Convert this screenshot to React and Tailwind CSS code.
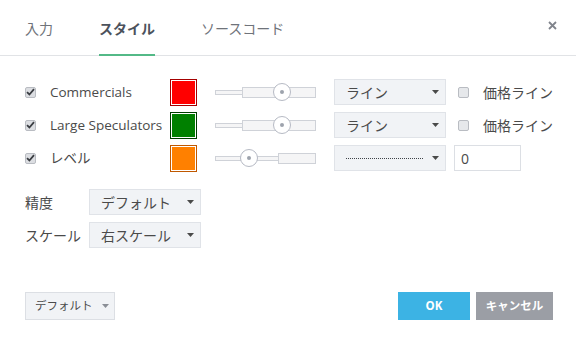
import React from 'react';

const font = { fontFamily: '"Open Sans", "Noto Sans CJK JP", sans-serif' };

const Check = ({ className = '' }) => (
  <span className={`flex h-[11px] w-[11px] items-center justify-center rounded-[2px] border border-[#b9bcc2] bg-[#dcdee2] ${className}`}>
    <svg width="9" height="8" viewBox="0 0 9 8">
      <path d="M1 4.2 L3.4 6.5 L8 1.2" fill="none" stroke="#3a3d42" strokeWidth="1.8" />
    </svg>
  </span>
);

const EmptyCheck = () => (
  <span className="ml-[12px] h-[11px] w-[11px] rounded-[2px] border border-[#b9bcc2] bg-[#e6e8eb]" />
);

const Arrow = ({ color = '#4a4a4a' }) => (
  <svg width="7" height="4" viewBox="0 0 7 4">
    <path d="M0 0 L7 0 L3.5 4 Z" fill={color} />
  </svg>
);

const Select = ({ children, className = '' }) => (
  <div className={`flex h-[26px] items-center justify-between border border-[#e0e3e8] bg-[#f1f3f6] pl-[11px] pr-[6px] text-[14px] text-[#4a4a4a] ${className}`}>
    {children}
    <Arrow />
  </div>
);

const Swatch = ({ fill, edge }) => (
  <div className="h-[27px] w-[27px] border p-[1px]" style={{ borderColor: edge }}>
    <div className="h-full w-full" style={{ background: fill }} />
  </div>
);

const Slider = ({ thick, handle }) => (
  <div className="relative h-[18px] w-[101px]">
    <div className="absolute left-0 right-0 top-[7px] h-[5px] border border-[#cfd2d8] bg-[#f5f5f6]" />
    <div className="absolute right-0 top-[4px] h-[11px] border border-[#cfd2d8] bg-[#f5f5f6]" style={{ left: thick }} />
    <div
      className="absolute top-0 flex h-[18px] w-[18px] items-center justify-center rounded-full border border-[#b6bac4] bg-white"
      style={{ left: handle - 9 }}
    >
      <div className="h-[4px] w-[4px] rounded-full bg-[#9ea3ad]" />
    </div>
  </div>
);

const rows = [
  { label: 'Commercials', fill: '#ff0000', edge: '#a40000', thick: 27, handle: 67, kind: 'line' },
  { label: 'Large Speculators', fill: '#008000', edge: '#003d00', thick: 27, handle: 67, kind: 'line' },
  { label: 'レベル', fill: '#ff8000', edge: '#c05800', thick: 63, handle: 34, kind: 'level' },
];

export default function App() {
  return (
    <div className="h-[344px] w-[576px] bg-white text-[#4a4a4a]" style={font}>
      <div className="flex h-[56px] items-end border-b border-[#e1e3e6] pl-[25px] pr-[19px]">
        <div className="flex h-full flex-1 items-stretch gap-[46px] text-[14px]">
          <div className="flex items-center pt-[2px] text-[#6f737a]">入力</div>
          <div className="relative flex items-center pt-[2px] font-bold text-[#4c525c]">
            スタイル
            <div className="absolute bottom-[-1px] left-0 right-0 h-[2px] bg-[#53b987]" />
          </div>
          <div className="flex items-center pt-[2px] text-[#6f737a]">ソースコード</div>
        </div>
        <div className="flex h-full items-center pb-[4px]">
          <svg width="9" height="9" viewBox="0 0 9 9">
            <path d="M1 1 L8 8 M8 1 L1 8" stroke="#80848c" strokeWidth="1.8" />
          </svg>
        </div>
      </div>

      <div className="flex flex-col gap-[7px] pl-[25px] pt-[23px]">
        {rows.map((r) => (
          <div key={r.label} className="flex h-[26px] items-center">
            <Check />
            <span className="ml-[14px] w-[120px] text-[13.5px] text-[#4a4a4a]">{r.label}</span>
            <Swatch fill={r.fill} edge={r.edge} />
            <div className="ml-[18px]">
              <Slider thick={r.thick} handle={r.handle} />
            </div>
            {r.kind === 'line' ? (
              <>
                <Select className="ml-[18px] w-[112px]">ライン</Select>
                <EmptyCheck />
                <span className="ml-[14px] text-[14px]">価格ライン</span>
              </>
            ) : (
              <>
                <Select className="ml-[18px] w-[112px]">
                  <span className="h-0 w-[77px] border-t border-dotted border-[#3f4349]" />
                </Select>
                <div className="ml-[8px] flex h-[26px] w-[67px] items-center border border-[#dcdfe4] bg-white pl-[6px] text-[14px]">
                  0
                </div>
              </>
            )}
          </div>
        ))}
      </div>

      <div className="mt-[18px] flex flex-col gap-[7px] pl-[25px] text-[14px]">
        <div className="flex h-[26px] items-center">
          <span className="w-[64px]">精度</span>
          <Select className="w-[112px]">デフォルト</Select>
        </div>
        <div className="flex h-[26px] items-center">
          <span className="w-[64px]">スケール</span>
          <Select className="w-[112px]">右スケール</Select>
        </div>
      </div>

      <div className="mt-[44px] flex items-center justify-between pl-[25px] pr-[23px]">
        <div className="flex h-[28px] w-[90px] items-center gap-[9px] border border-[#dcdfe4] bg-[#f1f3f6] pl-[9px] text-[11.5px] text-[#4a4a4a]">
          デフォルト
          <Arrow color="#8a8e96" />
        </div>
        <div className="flex gap-[6px] text-[11.5px] font-bold text-white">
          <div className="flex h-[28px] w-[72px] items-center justify-center bg-[#3cb3e4]">OK</div>
          <div className="flex h-[28px] w-[77px] items-center justify-center bg-[#9b9ea5]">キャンセル</div>
        </div>
      </div>
    </div>
  );
}
